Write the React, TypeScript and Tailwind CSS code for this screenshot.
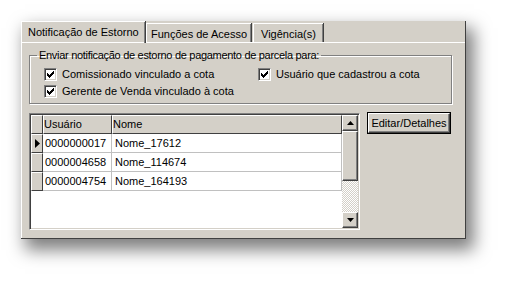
import React from "react";

const rows = [
  { id: "0000000017", name: "Nome_17612", current: true },
  { id: "0000004658", name: "Nome_114674", current: false },
  { id: "0000004754", name: "Nome_164193", current: false },
];

function Check({ label }: { label: string }) {
  return (
    <label className="flex h-[17px] items-center gap-[5px]">
      <span className="flex h-[13px] w-[13px] items-center justify-center border border-t-[#808080] border-l-[#808080] border-r-white border-b-white bg-white shadow-[inset_1px_1px_0_#404040,inset_-1px_-1px_0_#d4d0c8]">
        <svg width="7" height="7" viewBox="0 0 7 7">
          <path d="M0 2h1v1h1v1h1v-1h1v-1h1v-1h1v-1h1v3h-1v1h-1v1h-1v1h-1v1h-1v-1h-1v-1h-1z" fill="#000" />
        </svg>
      </span>
      <span>{label}</span>
    </label>
  );
}

function Arrow({ up }: { up: boolean }) {
  return (
    <div className="flex h-[16px] w-[16px] items-center justify-center border border-t-white border-l-white border-r-[#404040] border-b-[#404040] bg-[#d4d0c8] shadow-[inset_-1px_-1px_0_#808080]">
      <svg width="7" height="4" viewBox="0 0 7 4">
        <path d={up ? "M3.5 0L7 4H0z" : "M0 0h7L3.5 4z"} fill="#000" />
      </svg>
    </div>
  );
}

export default function App() {
  return (
    <div className="h-[281px] w-[508px] bg-white pl-[21px] pt-[21px] font-['Liberation_Sans',Arial,sans-serif] text-[11px] leading-[13px] text-black">
      <div className="flex h-[218px] w-[445px] flex-col border-b border-r border-[#404040] bg-[#d4d0c8] shadow-[6px_9px_16px_2px_rgba(0,0,0,0.5)]">
        <div className="flex h-[21px] items-end">
          <div className="relative z-10 -mb-px flex h-[22px] w-[124px] items-center border-l border-t border-white pl-[6px] shadow-[inset_-1px_0_0_#808080,1px_0_0_#404040]">
            Notificação de Estorno
          </div>
          <div className="ml-[1px] flex h-[19px] w-[105px] items-center border-l border-t border-white pl-[4px] pt-[2px] shadow-[inset_-1px_0_0_#808080,1px_0_0_#404040]">
            Funções de Acesso
          </div>
          <div className="ml-[2px] flex h-[19px] w-[70px] items-center border-l border-t border-white pl-[7px] pt-[2px] shadow-[inset_-1px_0_0_#808080,1px_0_0_#404040]">
            Vigência(s)
          </div>
        </div>
        <div className="flex flex-1 flex-col border-l border-t border-white pl-[7px] pr-[13px]">
          <fieldset className="mt-[6px] h-[55px] border border-[#808080] pl-[14px] shadow-[inset_1px_1px_0_white,1px_1px_0_white]">
            <legend className="-ml-[7px] px-[2px] tracking-[-0.3px]">Enviar notificação de estorno de pagamento de parcela para:</legend>
            <div className="mt-[4px] grid grid-cols-[214px_1fr]">
              <Check label="Comissionado vinculado a cota" />
              <Check label="Usuário que cadastrou a cota" />
              <Check label="Gerente de Venda vinculado à cota" />
            </div>
          </fieldset>
          <div className="mt-[9px] flex items-start gap-[7px]">
            <div className="flex h-[117px] w-[331px] border border-b-white border-l-[#808080] border-r-white border-t-[#808080] bg-white shadow-[inset_1px_1px_0_#404040,inset_-1px_-1px_0_#d4d0c8] p-[1px]">
              <div className="flex flex-1 flex-col">
                <div className="flex h-[19px] bg-[#d4d0c8]">
                  <div className="w-[12px] border border-b-[#404040] border-l-white border-r-[#404040] border-t-white" />
                  <div className="flex w-[69px] items-center border border-b-[#404040] border-l-white border-r-[#404040] border-t-white">Usuário</div>
                  <div className="flex flex-1 items-center border border-b-[#404040] border-l-white border-r-[#404040] border-t-white">Nome</div>
                </div>
                {rows.map((r) => (
                  <div key={r.id} className="flex h-[19px]">
                    <div className="flex w-[12px] items-center justify-center border border-b-[#404040] border-l-white border-r-[#404040] border-t-white bg-[#d4d0c8]">
                      {r.current && (
                        <svg width="5" height="9" viewBox="0 0 5 9">
                          <path d="M0 0L5 4.5L0 9z" fill="#000" />
                        </svg>
                      )}
                    </div>
                    <div className="flex w-[69px] items-center border-b border-r border-[#c0c0c0] pl-[2px]">{r.id}</div>
                    <div className="flex flex-1 items-center border-b border-r border-[#c0c0c0] pl-[3px]">{r.name}</div>
                  </div>
                ))}
              </div>
              <div className="flex w-[16px] flex-col">
                <Arrow up />
                <div className="h-[50px] border border-b-[#404040] border-l-white border-r-[#404040] border-t-white bg-[#d4d0c8] shadow-[inset_-1px_-1px_0_#808080]" />
                <div className="flex-1 bg-[repeating-conic-gradient(#ffffff_0_25%,#d4d0c8_0_50%)] bg-[length:2px_2px]" />
                <Arrow up={false} />
              </div>
            </div>
            <button className="-mt-[1px] h-[22px] w-[84px] border border-black bg-[#d4d0c8]">
              <div className="flex h-full w-full items-center justify-center border border-b-[#404040] border-l-white border-r-[#404040] border-t-white shadow-[inset_-1px_-1px_0_#808080]">
                Editar/Detalhes
              </div>
            </button>
          </div>
        </div>
      </div>
    </div>
  );
}
